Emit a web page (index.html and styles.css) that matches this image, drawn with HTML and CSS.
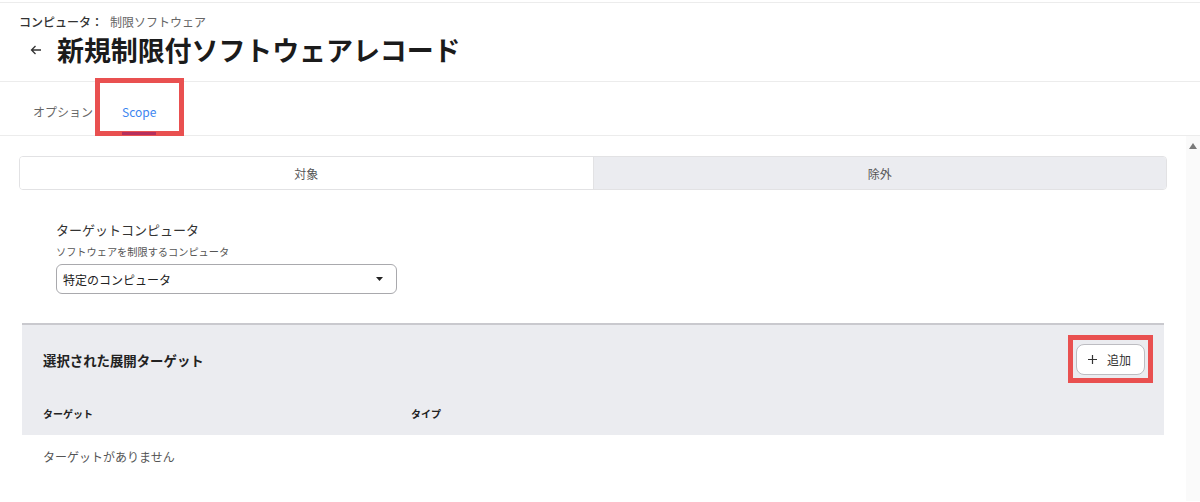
FILE: index.html
```html
<!DOCTYPE html>
<html lang="ja">
<head>
<meta charset="utf-8">
<link rel="stylesheet" href="styles.css">
</head>
<body>
<div class="page">
  <header class="header">
    <div class="crumbs"><span class="crumb-root">コンピュータ：</span><span class="crumb-leaf">制限ソフトウェア</span></div>
    <div class="title-row">
      <svg class="back" width="12" height="10" viewBox="0 0 12 10"><path d="M11 5H1.5M5.5 1L1.5 5l4 4" fill="none" stroke="#333" stroke-width="1.3"/></svg>
      <h1 class="title">新規制限付ソフトウェアレコード</h1>
    </div>
  </header>
  <nav class="tabs">
    <span class="tab">オプション</span>
    <span class="tab tab-active">Scope</span>
    <div class="mark mark-tab"></div>
  </nav>
  <div class="body">
    <main class="main">
      <div class="segment">
        <div class="seg seg-on">対象</div>
        <div class="seg seg-off">除外</div>
      </div>
      <div class="field">
        <div class="field-label">ターゲットコンピュータ</div>
        <div class="field-help">ソフトウェアを制限するコンピュータ</div>
        <div class="select"><span>特定のコンピュータ</span><svg width="7" height="4" viewBox="0 0 7 4"><path d="M0 0h7L3.5 4z" fill="#222"/></svg></div>
      </div>
      <section class="panel">
        <div class="panel-head">
          <h2 class="panel-title">選択された展開ターゲット</h2>
          <div class="btn-wrap">
            <button class="btn"><svg width="9" height="9" viewBox="0 0 9 9"><path d="M4.5 0v9M0 4.5h9" stroke="#333" stroke-width="1.2"/></svg><span>追加</span></button>
            <div class="mark mark-btn"></div>
          </div>
        </div>
        <div class="thead">
          <div class="col col-target">ターゲット</div>
          <div class="col">タイプ</div>
        </div>
      </section>
      <div class="empty">ターゲットがありません</div>
    </main>
    <div class="scrollbar"><svg width="8" height="6" viewBox="0 0 8 6"><path d="M0 6h8L4 0z" fill="#7a7a7a"/></svg></div>
  </div>
</div>
</body>
</html>
```
FILE: styles.css
```css
* { box-sizing: border-box; }
html, body { margin: 0; padding: 0; background: #fff; }
body {
  font-family: "Noto Sans CJK JP", "Noto Sans", "Liberation Sans", sans-serif;
  color: #333;
  width: 1200px;
  height: 502px;
  overflow: hidden;
}
.page { padding-top: 2px; }
.header {
  border-top: 1px solid #ececec;
  border-bottom: 1px solid #ececec;
  padding: 11px 0 13px 19px;
}
.crumbs { font-size: 12px; line-height: 16px; }
.crumb-root { color: #333; font-weight: 500; }
.crumb-leaf { color: #666; margin-left: 7px; }
.title-row { display: flex; align-items: center; margin-top: 2px; height: 36px; }
.back { margin-left: 11px; margin-right: 15px; }
.title {
  margin: 0;
  font-size: 27px;
  font-weight: 700;
  color: #1b1b1b;
  line-height: 36px;
  letter-spacing: -0.1px;
}
.tabs {
  position: relative;
  display: flex;
  height: 54px;
  border-bottom: 1px solid #ececec;
  padding-left: 33px;
  gap: 29px;
}
.tab {
  font-size: 12px;
  color: #666;
  line-height: 16px;
  padding-top: 22px;
  height: 53px;
}
.tab-active {
  color: #3d86f0;
  position: relative;
  z-index: 1;
  border-bottom: 3px solid #b52f5d;
}
.mark {
  position: absolute;
  border: 5px solid #e95050;
  pointer-events: none;
}
.mark-tab { left: 95px; top: -4px; width: 89px; height: 58px; }
.body { display: flex; }
.main { flex: 1; padding: 20px 19px 0 19px; }
.scrollbar {
  width: 14px;
  height: 365px;
  background: #fafafa;
  display: flex;
  justify-content: center;
  padding-top: 7px;
}
.segment {
  display: flex;
  height: 34px;
  border: 1px solid #e2e2e4;
  border-radius: 4px;
  overflow: hidden;
  width: 1148px;
}
.seg {
  flex: 1;
  display: flex;
  align-items: center;
  justify-content: center;
  font-size: 12px;
  color: #555;
}
.seg-on { background: #fff; border-right: 1px solid #e2e2e4; }
.seg-off { background: #ebecf0; }
.field { margin: 31px 0 0 37px; }
.field-label { font-size: 13px; line-height: 18px; color: #333; }
.field-help { font-size: 10.2px; line-height: 14px; color: #555; margin-top: 6px; }
.select {
  margin-top: 5px;
  width: 341px;
  height: 30px;
  border: 1px solid #a9a9ad;
  border-radius: 6px;
  display: flex;
  align-items: center;
  justify-content: space-between;
  padding: 0 13px 0 6px;
  font-size: 12px;
  color: #222;
}
.panel {
  margin: 29px 3px 0 3px;
  width: 1142px;
  background: #ebecf0;
  border-top: 2px solid #c9c9ce;
}
.panel-head {
  display: flex;
  align-items: center;
  justify-content: space-between;
  padding: 19px 19px 16px 21px;
}
.panel-title { margin: 0; font-size: 13.4px; font-weight: 700; color: #222; }
.btn-wrap { position: relative; }
.btn {
  display: flex;
  align-items: center;
  gap: 10px;
  height: 31px;
  width: 69px;
  padding: 0 0 0 11px;
  background: #fff;
  border: 1px solid #bdbdc2;
  border-radius: 8px;
  font-family: inherit;
  font-size: 12px;
  color: #333;
}
.mark-btn { left: -8px; top: -9px; width: 85px; height: 48px; }
.thead {
  display: flex;
  align-items: center;
  height: 44px;
  padding-left: 21px;
  font-size: 10px;
  font-weight: 700;
  color: #222;
}
.col-target { width: 368px; }
.empty {
  padding: 13px 0 0 24px;
  font-size: 12px;
  line-height: 18px;
  color: #555;
}
```
